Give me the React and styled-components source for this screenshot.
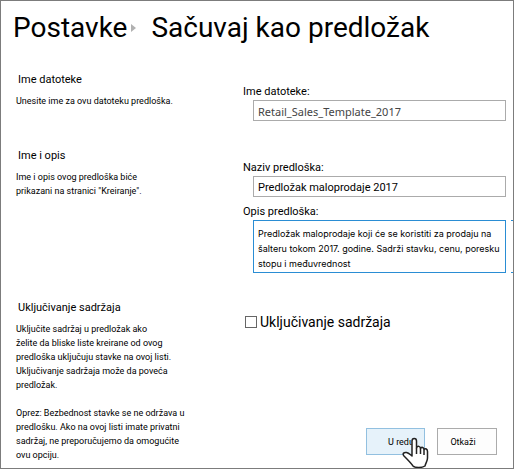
import React from 'react';
import styled, { createGlobalStyle } from 'styled-components';

const GlobalStyle = createGlobalStyle`
  *, *::before, *::after { box-sizing: border-box; }
  body { margin: 0; background: #fff; color: #000; font-family: Roboto, "Liberation Sans", sans-serif; }
  input, textarea, button { font-family: inherit; border-radius: 0; margin: 0; }
`;

const Page = styled.main`
  min-height: 100vh;
  border: 1px solid #7c7c7c;
  padding: 10px 7px 5px 12px;
  overflow: hidden;
`;

const Title = styled.h1`
  display: flex;
  align-items: center;
  margin: 0 0 27px;
  font-size: 28px;
  line-height: 34px;
  font-weight: 400;
  white-space: nowrap;
`;

const Crumb = styled.a`
  color: inherit;
  text-decoration: none;
`;

const Arrow = styled.svg`
  width: 5px;
  height: 8px;
  margin: 0 15px 0 4px;
  fill: #b1b1b1;
`;

const Form = styled.form`
  display: flex;
  flex-direction: column;
  gap: 27px;
  padding-left: 3px;
`;

const Section = styled.section`
  display: grid;
  grid-template-columns: 227px 1fr;
`;

const Heading = styled.h2`
  margin: 0 0 6px;
  padding-left: 2px;
  font-size: 11px;
  line-height: 16px;
  font-weight: 400;
`;

const Note = styled.p`
  margin: 0 0 14px;
  font-size: 9px;
  line-height: 14px;
  white-space: pre-line;
  &:last-child { margin-bottom: 0; }
`;

const Fields = styled.div`
  display: flex;
  flex-direction: column;
  gap: 7px;
  padding-top: 12px;
`;

const Field = styled.div`
  position: relative;
  display: flex;
  flex-direction: column;
  padding-left: 10px;
`;

const Label = styled.label`
  margin-left: -10px;
  font-size: 11px;
  line-height: 16px;
`;

const TextInput = styled.input`
  width: 100%;
  height: 21px;
  padding: 1px 4px 0;
  border: 1px solid #ababab;
  background: #fff;
  color: ${p => p.$muted ? '#444' : '#000'};
  font-size: 11px;
  outline: none;
  ${p => p.$muted && 'font-family: "Noto Sans", sans-serif;'}
`;

const TextArea = styled.textarea`
  display: block;
  width: 100%;
  height: 53px;
  padding: 5px 4px 0;
  border: 1px solid #2a8dd4;
  background: #fff;
  color: #000;
  font-family: Inter, sans-serif;
  font-size: 9px;
  line-height: 15px;
  resize: none;
  overflow: hidden;
  outline: none;
  white-space: pre;
`;

const Edge = styled.span`
  position: absolute;
  right: -8px;
  bottom: 0;
  width: 3px;
  height: 53px;
  border: solid #2a8dd4;
  border-width: 1px 0;
`;

const CheckRow = styled.div`
  display: flex;
  align-items: center;
  gap: 3px;
  padding: 1px 0 0 2px;
`;

const Checkbox = styled.input`
  appearance: none;
  width: 12px;
  height: 12px;
  border: 1px solid #666;
  background: #fff;
  &:checked { background: #2a8dd4; }
`;

const CheckLabel = styled.label`
  font-size: 14px;
  line-height: 18px;
`;

const Actions = styled.div`
  display: flex;
  justify-content: flex-end;
  gap: 12px;
  margin-top: auto;
  padding: 0 9px 7px 0;
`;

const Button = styled.button`
  position: relative;
  width: ${p => p.$primary ? 59 : 60}px;
  height: 27px;
  padding: ${p => p.$primary ? '0 0 0 11px' : '0 8px 0 0'};
  border: 1px solid ${p => p.$primary ? '#92c0e0' : '#ababab'};
  background: ${p => p.$primary ? '#e6f2fa' : '#fdfdfd'};
  color: #000;
  font-size: 9px;
`;

const Pointer = styled.svg`
  position: absolute;
  left: 35px;
  top: 8px;
  width: 27px;
  height: 31px;
  pointer-events: none;
`;

export default function App() {
  return (
    <>
      <GlobalStyle />
      <Page>
        <Title>
          <Crumb href="#postavke">Postavke</Crumb>
          <Arrow viewBox="0 0 5 8" aria-hidden="true"><path d="M0 0L5 4L0 8Z" /></Arrow>
          <span>Sačuvaj kao predložak</span>
        </Title>
        <Form onSubmit={e => e.preventDefault()}>
          <Section>
            <div>
              <Heading>Ime datoteke</Heading>
              <Note>Unesite ime za ovu datoteku predloška.</Note>
            </div>
            <Fields>
              <Field>
                <Label htmlFor="file">Ime datoteke:</Label>
                <TextInput id="file" $muted defaultValue="Retail_Sales_Template_2017" />
              </Field>
            </Fields>
          </Section>
          <Section>
            <div>
              <Heading>Ime i opis</Heading>
              <Note>{'Ime i opis ovog predloška biće\nprikazani na stranici "Kreiranje".'}</Note>
            </div>
            <Fields>
              <Field>
                <Label htmlFor="name">Naziv predloška:</Label>
                <TextInput id="name" defaultValue="Predložak maloprodaje 2017" />
              </Field>
              <Field>
                <Label htmlFor="description">Opis predloška:</Label>
                <TextArea
                  id="description"
                  defaultValue={'Predložak maloprodaje koji će se koristiti za prodaju na\nšalteru tokom 2017. godine. Sadrži stavku, cenu, poresku\nstopu i međuvrednost'}
                />
                <Edge />
              </Field>
            </Fields>
          </Section>
          <Section>
            <div>
              <Heading>Uključivanje sadržaja</Heading>
              <Note>{'Uključite sadržaj u predložak ako\nželite da bliske liste kreirane od ovog\npredloška uključuju stavke na ovoj listi.\nUključivanje sadržaja može da poveća\npredložak.'}</Note>
              <Note>{'Oprez: Bezbednost stavke se ne održava u\npredlošku. Ako na ovoj listi imate privatni\nsadržaj, ne preporučujemo da omogućite\novu opciju.'}</Note>
            </div>
            <Fields>
              <CheckRow>
                <Checkbox type="checkbox" id="content" />
                <CheckLabel htmlFor="content">Uključivanje sadržaja</CheckLabel>
              </CheckRow>
              <Actions>
                <Button type="submit" $primary>
                  U redu
                  <Pointer viewBox="0 0 27 31" aria-hidden="true">
                    <path
                      d="M10 18V4C10 0.500 14.500 0.500 14.500 4V11C15.500 8.500 18.500 9 18.500 11.500C19.500 9.500 22 10.500 22 12.500C23.500 11 25.500 12 25.500 14.500V21C25.500 24 24 25 23 29C20 31 13 31 11 29C9 26 5 22 2 19C0 16.500 2 15 4.500 15.500C7 16 8 17.500 10 19Z"
                      fill="#fff" stroke="#222" strokeWidth="1.500" strokeLinejoin="round"
                    />
                    <path d="M14.500 11V17M18.500 11.500V17M22 12.500V18" fill="none" stroke="#222" strokeWidth="1.500" />
                  </Pointer>
                </Button>
                <Button type="button">Otkaži</Button>
              </Actions>
            </Fields>
          </Section>
        </Form>
      </Page>
    </>
  );
}
